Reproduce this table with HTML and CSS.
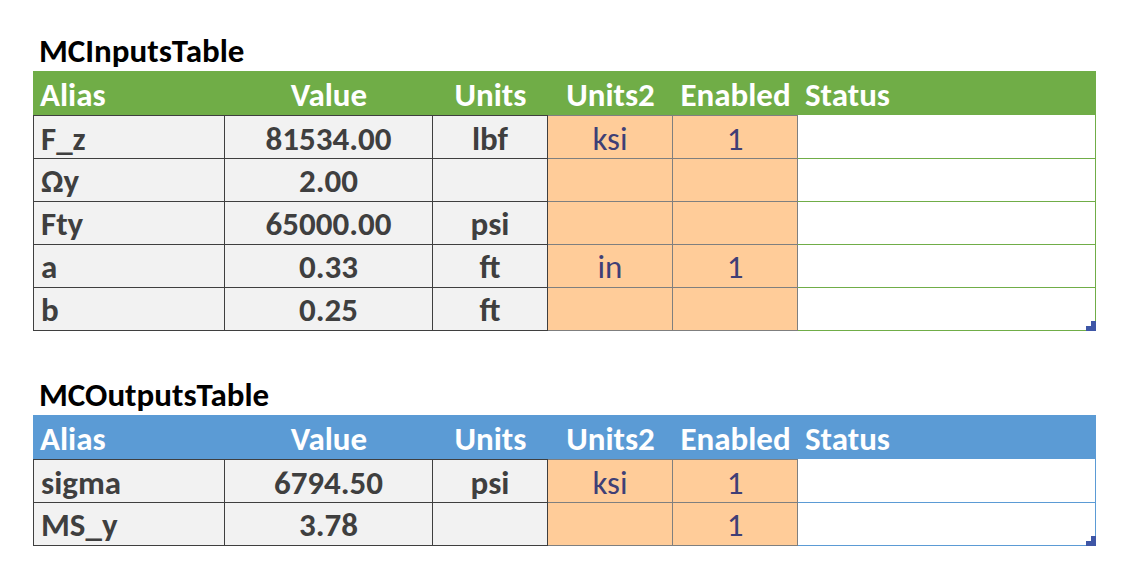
FILE: index.html
```html
<!DOCTYPE html>
<html>
<head>
<meta charset="utf-8">
<link rel="stylesheet" href="styles.css">
</head>
<body>
<section class="block">
  <div class="title">MCInputsTable</div>
  <div class="sheet green">
    <div class="hd left">Alias</div><div class="hd">Value</div><div class="hd">Units</div><div class="hd">Units2</div><div class="hd">Enabled</div><div class="hd left">Status</div>

    <div class="out first-col top left">F_z</div><div class="out top">81534.00</div><div class="out top">lbf</div><div class="in top">ksi</div><div class="in top">1</div><div class="st"></div>

    <div class="out first-col left">Ωy</div><div class="out">2.00</div><div class="out"></div><div class="in"></div><div class="in"></div><div class="st"></div>

    <div class="out first-col left">Fty</div><div class="out">65000.00</div><div class="out">psi</div><div class="in"></div><div class="in"></div><div class="st"></div>

    <div class="out first-col left">a</div><div class="out">0.33</div><div class="out">ft</div><div class="in">in</div><div class="in">1</div><div class="st"></div>

    <div class="out first-col left">b</div><div class="out">0.25</div><div class="out">ft</div><div class="in"></div><div class="in"></div><div class="st"></div>
    <svg class="handle" width="10" height="10" viewBox="0 0 10 10"><polygon points="5,0 10,0 10,10 0,10 0,5 5,5"/></svg>
  </div>
</section>

<section class="block second">
  <div class="title">MCOutputsTable</div>
  <div class="sheet blue">
    <div class="hd left">Alias</div><div class="hd">Value</div><div class="hd">Units</div><div class="hd">Units2</div><div class="hd">Enabled</div><div class="hd left">Status</div>

    <div class="out first-col top left">sigma</div><div class="out top">6794.50</div><div class="out top">psi</div><div class="in top">ksi</div><div class="in top">1</div><div class="st"></div>

    <div class="out first-col left">MS_y</div><div class="out">3.78</div><div class="out"></div><div class="in"></div><div class="in">1</div><div class="st"></div>
    <svg class="handle" width="10" height="10" viewBox="0 0 10 10"><polygon points="5,0 10,0 10,10 0,10 0,5 5,5"/></svg>
  </div>
</section>
</body>
</html>
```

FILE: styles.css
```css
html, body {
  margin: 0;
  padding: 0;
  background: #ffffff;
}
body {
  font-family: "Carlito", "Lato", "Liberation Sans", sans-serif;
  font-size: 33px;
  padding: 34px 0 0 33px;
}
.block {
  width: 1063px;
}
.block.second {
  margin-top: 47px;
}
.title {
  font-weight: 700;
  color: #000;
  line-height: 34px;
  height: 34px;
  padding-left: 6px;
  margin-bottom: 3px;
}
.second .title {
  margin-bottom: 3px;
}
.sheet {
  position: relative;
  display: grid;
  grid-template-columns: 192px 208px 115px 125px 125px 298px;
}
.green {
  grid-template-rows: 44px 44px 43px 43px 43px 43px;
}
.blue {
  grid-template-rows: 44px 44px 43px;
}
.sheet > div {
  box-sizing: border-box;
  line-height: 34px;
  padding-top: 5px;
  text-align: center;
  white-space: nowrap;
}
.sheet > div.left {
  text-align: left;
  padding-left: 7px;
}
.hd {
  color: #ffffff;
  font-weight: 700;
  padding-top: 7px !important;
}
.green .hd { background: #70AD47; }
.blue .hd { background: #5B9BD5; }
.out {
  background: #F2F2F2;
  color: #3F3F3F;
  font-weight: 700;
  border-right: 1px solid #3F3F3F;
  border-bottom: 1px solid #3F3F3F;
}
.out.first-col {
  border-left: 1px solid #3F3F3F;
}
.out.top {
  border-top: 1px solid #3F3F3F;
}
.in {
  background: #FFCC99;
  color: #3F3F76;
  font-weight: 400;
  border-right: 1px solid #7F7F7F;
  border-bottom: 1px solid #7F7F7F;
}
.in.top {
  border-top: 1px solid #7F7F7F;
}
.st {
  background: #ffffff;
}
.green .st {
  border-right: 1px solid #70AD47;
  border-bottom: 1px solid #70AD47;
}
.blue .st {
  border-right: 1px solid #5B9BD5;
  border-bottom: 1px solid #5B9BD5;
}
.sheet > .top {
  padding-top: 6px;
}
.handle {
  position: absolute;
  right: 0;
  bottom: 0;
  fill: #3E56A6;
}
```
